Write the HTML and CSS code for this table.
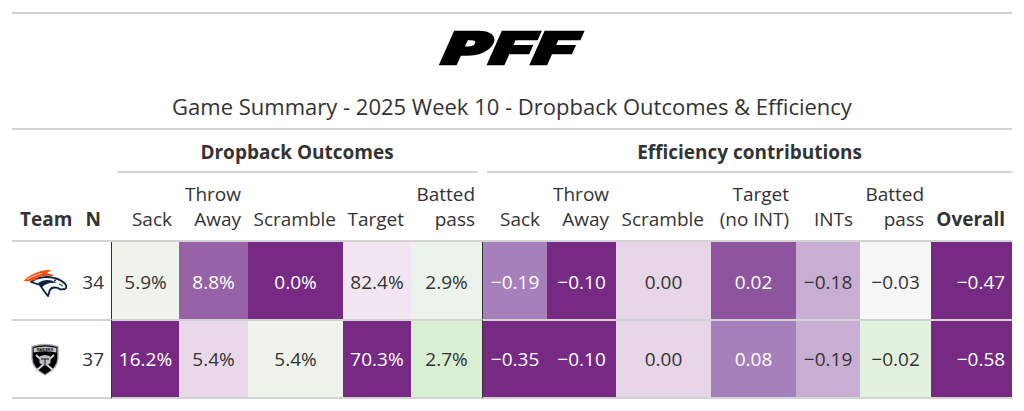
FILE: index.html
```html
<!DOCTYPE html>
<html lang="en">
<head>
<meta charset="utf-8">
<title>Game Summary - 2025 Week 10</title>
<link rel="stylesheet" href="styles.css">
</head>
<body>
<div class="page">
  <div class="logo"><span class="pff">PFF</span></div>
  <div class="title">Game Summary - 2025 Week 10 - Dropback Outcomes &amp; Efficiency</div>
  <table class="gt">
    <colgroup>
      <col class="w-team"><col class="w-n">
      <col class="w-sack"><col class="w-throw"><col class="w-scr"><col class="w-tgt"><col class="w-bat">
      <col class="w-esack"><col class="w-ethrow"><col class="w-escr"><col class="w-etgt"><col class="w-int"><col class="w-ebat"><col class="w-ovr">
    </colgroup>
    <thead>
      <tr class="spanners">
        <th colspan="2"></th>
        <th colspan="5" class="sp sp-left"><span class="sp-label">Dropback Outcomes</span></th>
        <th colspan="7" class="sp sp-right"><span class="sp-label">Efficiency contributions</span></th>
      </tr>
      <tr class="labels">
        <th class="h-team">Team</th>
        <th class="h-n">N</th>
        <th>Sack</th>
        <th>Throw<br>Away</th>
        <th>Scramble</th>
        <th>Target</th>
        <th>Batted<br>pass</th>
        <th>Sack</th>
        <th>Throw<br>Away</th>
        <th>Scramble</th>
        <th>Target<br>(no INT)</th>
        <th>INTs</th>
        <th>Batted<br>pass</th>
        <th class="h-ovr">Overall</th>
      </tr>
    </thead>
    <tbody>
      <tr class="r1">
        <td class="team">
          <svg class="broncos" width="44" height="28" viewBox="0 0 44 28">
            <path d="M8 13 C14 8 24 7 31 9 C36 10 40 12 43 16 C44 19 42 21 40 20 C38 21 36 20 35 19 C31 18 28 19 27 21 C26 23 26 25 25 27 C22 24 19 19 17 16 C14 15 11 14 8 13 Z" fill="#fff" stroke="#0a2343" stroke-width="1.8" stroke-linejoin="round"/>
            <path d="M15 14 C21 10 28 10 34 14 C29 13 23 14 19 18 Z" fill="#0a2343"/>
            <path d="M36 15 L40 17" stroke="#0a2343" stroke-width="1"/>
            <circle cx="32" cy="11.6" r="1" fill="#0a2343"/>
            <path d="M0.5 12 C5 7 11 4 18 2 C22 0.8 26 0.6 29 1.5 C26 2.5 24 3.5 24 4.6 C27 4.6 30 5.6 31 7.2 C24 6 17 7 12 9.5 L16 9.6 C11 12 5.5 13 0.5 12 Z" fill="#fb4f14"/>
            <path d="M4 10.5 C9 7.5 14 5.5 19 4.2" fill="none" stroke="#fff" stroke-width="0.7"/>
          </svg>
        </td>
        <td class="n">34</td>
        <td class="sack g1">5.9%</td>
        <td class="p2">8.8%</td>
        <td class="p1">0.0%</td>
        <td class="l2">82.4%</td>
        <td class="g2">2.9%</td>
        <td class="sack p3">&minus;0.19</td>
        <td class="p1">&minus;0.10</td>
        <td class="l1">0.00</td>
        <td class="p2b">0.02</td>
        <td class="p4">&minus;0.18</td>
        <td class="w0">&minus;0.03</td>
        <td class="ovr p1">&minus;0.47</td>
      </tr>
      <tr class="r2">
        <td class="team">
          <svg class="raiders" width="32" height="33" viewBox="0 0 32 33">
            <path d="M3 3.5 Q16 -0.5 29 3.5 L29 15 Q29 25 16 32 Q3 25 3 15 Z" fill="#000" stroke="#a5acaf" stroke-width="1.4"/>
            <path d="M4.6 5 Q16 2 27.4 5 L27.4 9.5 Q16 7 4.6 9.5 Z" fill="#c4c8ca"/>
            <text x="16" y="8.3" text-anchor="middle" font-family="Liberation Sans, sans-serif" font-weight="700" font-size="3.6" fill="#000">RAIDERS</text>
            <path d="M7 12 L25 28 M25 12 L7 28" stroke="#d8dadb" stroke-width="1.8"/>
            <path d="M10.5 13.5 Q16 10.5 21.5 13.5 L21.5 20 Q16 24.5 10.5 20 Z" fill="#b9bec1"/>
            <path d="M12 16 L20 16 M16 16 L16 22" stroke="#000" stroke-width="0.9"/>
          </svg>
        </td>
        <td class="n">37</td>
        <td class="sack p1">16.2%</td>
        <td class="l1b">5.4%</td>
        <td class="g1">5.4%</td>
        <td class="p1">70.3%</td>
        <td class="g3">2.7%</td>
        <td class="sack p1">&minus;0.35</td>
        <td class="p1">&minus;0.10</td>
        <td class="l1">0.00</td>
        <td class="p3">0.08</td>
        <td class="p4">&minus;0.19</td>
        <td class="g4">&minus;0.02</td>
        <td class="ovr p1">&minus;0.58</td>
      </tr>
    </tbody>
  </table>
</div>
</body>
</html>
```

FILE: styles.css
```css
* { box-sizing: border-box; }

body {
  margin: 0;
  background: #ffffff;
  font-family: "Open Sans", "Noto Sans", sans-serif;
  color: #333333;
}

.page {
  width: 1000px;
  margin: 12px 0 0 12px;
  border-top: 2px solid #d3d3d3;
}

.logo {
  height: 68px;
  display: flex;
  align-items: center;
  justify-content: center;
}

.pff {
  display: inline-block;
  font-family: "Inter", "Liberation Sans", sans-serif;
  font-weight: 900;
  font-size: 44px;
  line-height: 1;
  color: #000;
  letter-spacing: 1px;
  -webkit-text-stroke: 2.5px #000;
  transform: skewX(-24deg) scaleX(1.6);
}

.title {
  height: 48px;
  border-bottom: 2px solid #d3d3d3;
  text-align: center;
  font-size: 22px;
  line-height: 48px;
  color: #333;
}

.gt {
  width: 1000px;
  table-layout: fixed;
  border-collapse: separate;
  border-spacing: 0;
}

.w-team { width: 66px; }
.w-n { width: 33px; }
.w-sack { width: 68px; }
.w-throw { width: 69px; }
.w-scr { width: 95px; }
.w-tgt { width: 68px; }
.w-bat { width: 71px; }
.w-esack { width: 65px; }
.w-ethrow { width: 69px; }
.w-escr { width: 95px; }
.w-etgt { width: 85px; }
.w-int { width: 64px; }
.w-ebat { width: 71px; }
.w-ovr { width: 81px; }

.spanners th {
  height: 43px;
  padding: 0;
  vertical-align: bottom;
}

.sp-label {
  display: block;
  font-size: 19px;
  font-weight: 700;
  line-height: 25px;
  padding-bottom: 6px;
  border-bottom: 2px solid #d3d3d3;
  text-align: center;
  white-space: nowrap;
}

.sp-left { padding: 0 5px 0 6px !important; }
.sp-right { padding: 0 0 0 5px !important; }

.labels th {
  height: 69px;
  padding: 0 7px 8px 0;
  vertical-align: bottom;
  text-align: right;
  font-size: 19px;
  font-weight: 400;
  line-height: 25px;
  border-bottom: 2px solid #d3d3d3;
  white-space: nowrap;
}

.labels .h-team {
  text-align: left;
  padding-left: 8px;
  font-weight: 700;
}

.labels .h-n {
  font-weight: 700;
  padding-right: 10px;
}

.labels .h-ovr { font-weight: 700; }

tbody td {
  padding: 0;
  text-align: center;
  vertical-align: middle;
  font-size: 19px;
  line-height: 25px;
  color: #333;
  white-space: nowrap;
}

.r1 td { height: 77px; padding-top: 4px; }
.r2 td {
  height: 80px;
  border-top: 2px solid #d3d3d3;
  border-bottom: 2px solid #d3d3d3;
}

td.team svg { display: block; margin: 0 auto; }
td.team .broncos { margin-top: 0; }
td.n { text-align: right; padding-right: 7px; }
td.sack { border-left: 1px solid #333; }
td.ovr { text-align: right; padding-right: 7px; }

.p1 { background: #762a83; color: #fff; }
.p2 { background: #9762a8; color: #fff; }
.p2b { background: #8c559d; color: #fff; }
.p3 { background: #a680bb; color: #fff; }
.p4 { background: #c9aed4; color: #333; }
.l1 { background: #e7d5e8; color: #333; }
.l1b { background: #e9d8ea; color: #333; }
.l2 { background: #f1e6f1; color: #333; }
.w0 { background: #f6f6f6; color: #333; }
.g1 { background: #eef3ec; color: #333; }
.g2 { background: #ecf3ea; color: #333; }
.g3 { background: #d8efd2; color: #333; }
.g4 { background: #e3f2de; color: #333; }
```
